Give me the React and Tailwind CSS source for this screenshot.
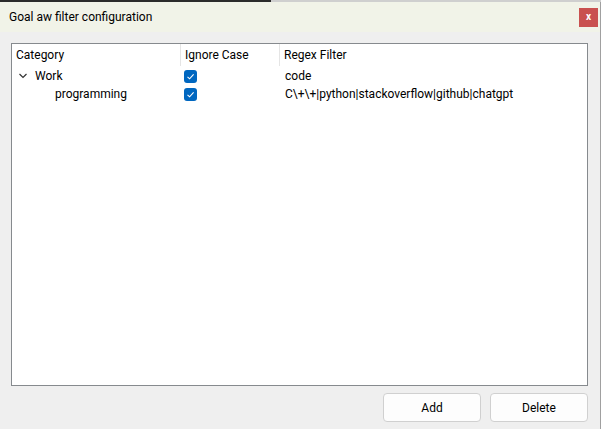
export default function App() {
  const check = (
    <span className="w-[13px] h-[13px] rounded-[3px] bg-[#0067c0] flex items-center justify-center">
      <svg width="9" height="9" viewBox="0 0 9 9" fill="none">
        <path d="M1.5 4.8 L3.6 6.8 L7.6 2.4" stroke="#ffffff" strokeWidth="1.1" />
      </svg>
    </span>
  );
  return (
    <div className="w-[601px] h-[429px] bg-[#efefef] flex flex-col text-[12px] text-black overflow-hidden" style={{ fontFamily: 'Roboto, "Noto Sans", sans-serif' }}>
      <div className="h-[2px] flex">
        <div className="w-[271px] bg-[#2b2b2b]"></div>
        <div className="flex-1 bg-[#cfcfcf]"></div>
      </div>
      <div className="h-[30px] bg-[#f1f3e8] flex items-center justify-between pl-[9px] pr-[2px] border-r border-[#a0a0a0]">
        <span className="text-[12px]">Goal aw filter configuration</span>
        <div className="w-[19px] h-[19px] bg-[#c9514f] flex items-center justify-center text-white text-[10px] font-bold leading-none">x</div>
      </div>
      <div className="flex-1 flex flex-col pt-[11px] px-[11px] border-r border-[#a0a0a0]">
        <div className="h-[343px] bg-white border border-[#868a8e] flex flex-col mr-[1px]">
          <div className="h-[22px] flex items-end">
            <div className="w-[169px] h-[22px] flex items-center pl-[4px] border-r border-[#e5e5e5]">Category</div>
            <div className="w-[99px] h-[22px] flex items-center pl-[4px] border-r border-[#e5e5e5]">Ignore Case</div>
            <div className="flex-1 h-[22px] flex items-center pl-[4px]">Regex Filter</div>
          </div>
          <div className="h-[18px] flex items-center mt-[1px]">
            <div className="w-[170px] flex items-center pl-[6px]">
              <svg width="10" height="10" viewBox="0 0 10 10" fill="none" className="mr-[7px]">
                <path d="M1.5 3 L5 6.5 L8.5 3" stroke="#333" strokeWidth="1.2" />
              </svg>
              <span>Work</span>
            </div>
            <div className="w-[99px] flex items-center pl-[2px]">{check}</div>
            <div className="flex-1 pl-[4px]">code</div>
          </div>
          <div className="h-[18px] flex items-center">
            <div className="w-[170px] pl-[43px]">programming</div>
            <div className="w-[99px] flex items-center pl-[2px]">{check}</div>
            <div className="flex-1 pl-[4px]">C\+\+|python|stackoverflow|github|chatgpt</div>
          </div>
        </div>
        <div className="flex justify-end gap-[9px] mt-[7px] mr-[1px]">
          <button className="w-[98px] h-[29px] bg-[#fdfdfd] border border-[#d0d0d0] rounded-[4px] text-[12px]">Add</button>
          <button className="w-[98px] h-[29px] bg-[#fdfdfd] border border-[#d0d0d0] rounded-[4px] text-[12px]">Delete</button>
        </div>
      </div>
    </div>
  );
}
